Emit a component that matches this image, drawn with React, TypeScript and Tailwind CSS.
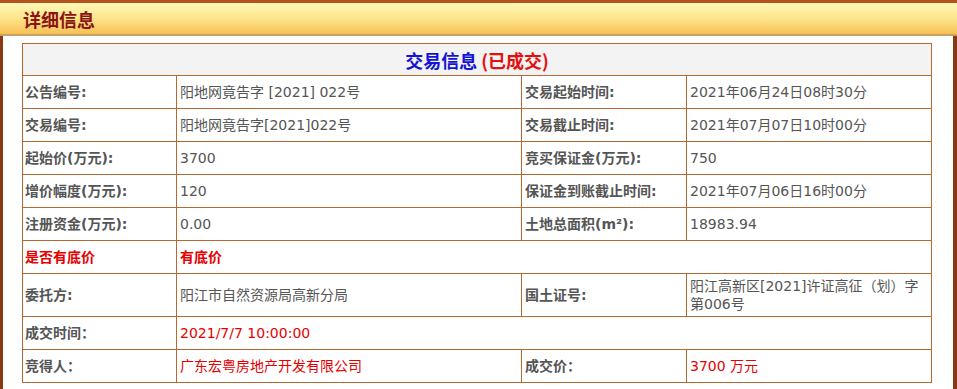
import React from 'react';

type Cell = { text: React.ReactNode; label?: boolean; red?: boolean; span?: number };

const rows: { h: string; cells: Cell[] }[] = [
  {
    h: 'h-[33px]',
    cells: [
      { text: '公告编号:', label: true },
      { text: '阳地网竟告字 [2021] 022号' },
      { text: '交易起始时间:', label: true },
      { text: '2021年06月24日08时30分' },
    ],
  },
  {
    h: 'h-[33px]',
    cells: [
      { text: '交易编号:', label: true },
      { text: '阳地网竟告字[2021]022号' },
      { text: '交易截止时间:', label: true },
      { text: '2021年07月07日10时00分' },
    ],
  },
  {
    h: 'h-[33px]',
    cells: [
      { text: '起始价(万元):', label: true },
      { text: '3700' },
      { text: '竞买保证金(万元):', label: true },
      { text: '750' },
    ],
  },
  {
    h: 'h-[33px]',
    cells: [
      { text: '增价幅度(万元):', label: true },
      { text: '120' },
      { text: '保证金到账截止时间:', label: true },
      { text: '2021年07月06日16时00分' },
    ],
  },
  {
    h: 'h-[33px]',
    cells: [
      { text: '注册资金(万元):', label: true },
      { text: '0.00' },
      { text: '土地总面积(m²):', label: true },
      { text: '18983.94' },
    ],
  },
  {
    h: 'h-[33px]',
    cells: [
      { text: '是否有底价', label: true, red: true },
      { text: '有底价', label: true, red: true, span: 3 },
    ],
  },
  {
    h: 'h-[43px]',
    cells: [
      { text: '委托方:', label: true },
      { text: '阳江市自然资源局高新分局' },
      { text: '国土证号:', label: true },
      {
        text: (
          <>
            阳江高新区[2021]许证高征（划）字
            <br />
            第006号
          </>
        ),
      },
    ],
  },
  {
    h: 'h-[33px]',
    cells: [
      { text: '成交时间：', label: true },
      { text: '2021/7/7 10:00:00', red: true, span: 3 },
    ],
  },
  {
    h: 'h-[33px]',
    cells: [
      { text: '竞得人：', label: true },
      { text: '广东宏粤房地产开发有限公司', red: true },
      { text: '成交价：', label: true },
      { text: '3700 万元', red: true },
    ],
  },
];

const App: React.FC = () => {
  return (
    <div className="w-[957px] h-[389px] overflow-hidden bg-white font-['DejaVu_Sans','Noto_Sans_CJK_SC',sans-serif]">
      {/* header band */}
      <div className="h-[36px] border-t-[3px] border-t-[#b4541c] border-b-2 border-b-[#c7a167] bg-gradient-to-b from-[#fff9b8] via-[#fde48a] to-[#f6c052] flex items-center pl-[23px]">
        <span className="text-[18px] font-bold text-[#8a1414] font-['Noto_Sans_CJK_SC',sans-serif] leading-none">
          详细信息
        </span>
      </div>

      <div className="h-[353px] border-l-[3px] border-r-[4px] border-[#8a3a12] pl-[19px] pt-[7px]">
        <table className="w-[909px] border-collapse table-fixed text-[14px] text-[#555]">
          <colgroup>
            <col className="w-[154px]" />
            <col className="w-[345px]" />
            <col className="w-[165px]" />
            <col className="w-[245px]" />
          </colgroup>
          <tbody>
            <tr className="h-[32px] bg-[#f3f3f3]">
              <td colSpan={4} className="border border-[#b8692f] text-center text-[18px] font-bold font-['Noto_Sans_CJK_SC',sans-serif] leading-none">
                <span className="text-[#1414d2]">交易信息 </span>
                <span className="text-[#e41010]">(已成交)</span>
              </td>
            </tr>
            {rows.map((row, i) => (
              <tr key={i} className={row.h}>
                {row.cells.map((c, j) => (
                  <td
                    key={j}
                    colSpan={c.span}
                    className={`border border-[#b8692f] align-middle leading-[18px] ${j === 0 ? 'pl-[2px]' : 'pl-[3px]'} ${c.label ? 'font-bold' : ''} ${c.red ? 'text-[#e60000]' : ''}`}
                  >
                    {c.text}
                  </td>
                ))}
              </tr>
            ))}
          </tbody>
        </table>
      </div>
    </div>
  );
};

export default App;
